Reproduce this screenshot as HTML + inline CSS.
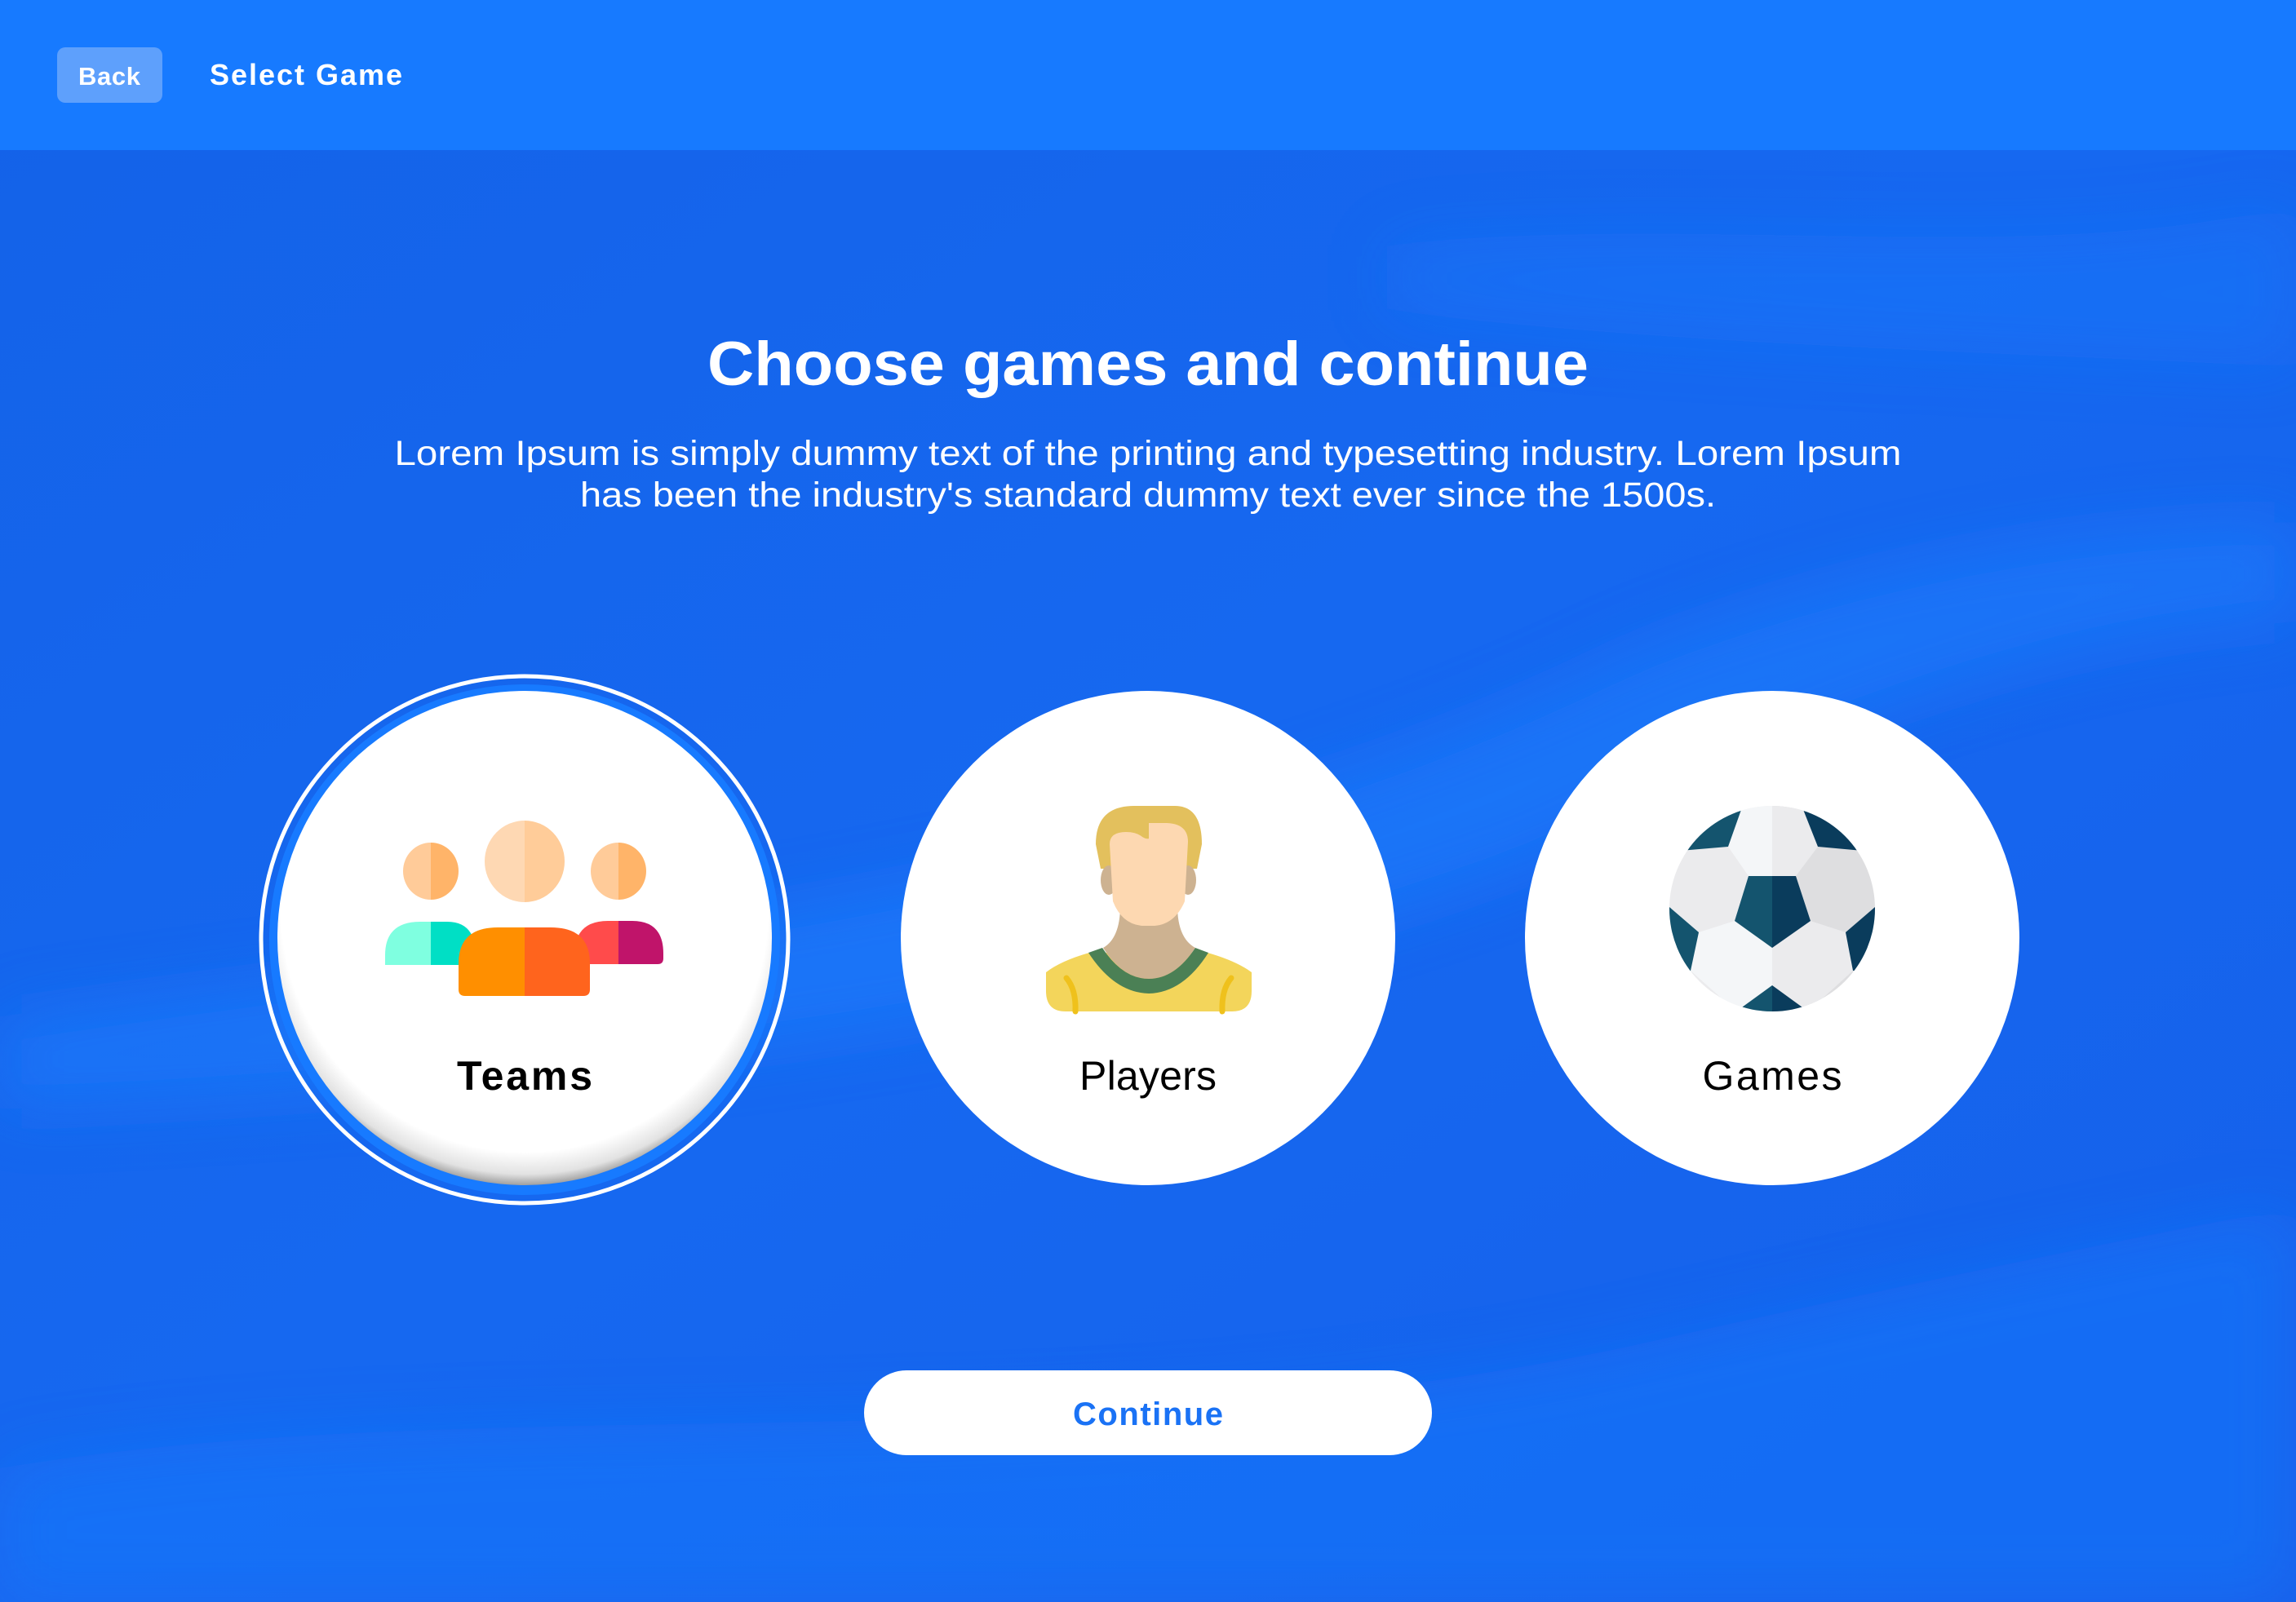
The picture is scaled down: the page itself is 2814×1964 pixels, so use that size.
<!DOCTYPE html>
<html><head><meta charset="utf-8"><style>
html,body{margin:0;padding:0;width:2814px;height:1964px;overflow:hidden;background:#1565ee}
svg{display:block}
text{font-family:"Liberation Sans",Arial,sans-serif}
</style></head><body>
<svg width="2814" height="1964" viewBox="0 0 2814 1964" xmlns="http://www.w3.org/2000/svg">
<defs>
<linearGradient id="bg" x1="0" y1="0" x2="1" y2="1">
<stop offset="0" stop-color="#1462e8"/><stop offset="0.5" stop-color="#1668f0"/><stop offset="1" stop-color="#1560ea"/>
</linearGradient>
<filter id="bl" x="-20%" y="-50%" width="140%" height="200%"><feGaussianBlur stdDeviation="40"/></filter>
<radialGradient id="sh" cx="0.5" cy="0.44" r="0.56">
<stop offset="0.88" stop-color="#fff"/><stop offset="0.96" stop-color="#e2e2e2"/><stop offset="1" stop-color="#a0a0a0"/>
</radialGradient>
<clipPath id="ball"><circle cx="2172" cy="1114" r="126"/></clipPath>
</defs>
<rect width="2814" height="1964" fill="url(#bg)"/>
<g filter="url(#bl)" opacity="0.9">
<path d="M0,1250 C700,1150 1400,1100 2000,800 C2300,680 2600,640 2814,640 L2814,760 C2500,780 2200,900 1900,1050 C1400,1250 700,1330 0,1360 Z" fill="#1a80ff" opacity="0.6"/>
<path d="M0,1800 C600,1700 1300,1800 2000,1650 C2400,1560 2700,1500 2814,1480 L2814,1964 L0,1964 Z" fill="#1a7cff" opacity="0.5"/>
<path d="M1700,300 C2100,260 2500,330 2814,250 L2814,450 C2400,430 2000,420 1700,380 Z" fill="#1a7cff" opacity="0.4"/>
</g>
<rect width="2814" height="184" fill="#177aff"/>
<rect x="70" y="58" width="129" height="68" rx="10" fill="#5ea0fc"/>
<text x="134" y="104" font-size="31" font-weight="bold" fill="#fff" text-anchor="middle" textLength="76">Back</text>
<text x="257" y="104" font-size="36" font-weight="bold" fill="#fff" textLength="236">Select Game</text>

<text x="1407" y="472" font-size="76" font-weight="bold" fill="#fff" text-anchor="middle" textLength="1080" lengthAdjust="spacingAndGlyphs">Choose games and continue</text>
<text x="1407" y="570" font-size="43" fill="#fff" text-anchor="middle" textLength="1847" lengthAdjust="spacingAndGlyphs">Lorem Ipsum is simply dummy text of the printing and typesetting industry. Lorem Ipsum</text>
<text x="1407" y="621" font-size="43" fill="#fff" text-anchor="middle" textLength="1392" lengthAdjust="spacingAndGlyphs">has been the industry's standard dummy text ever since the 1500s.</text>

<!-- Teams -->
<circle cx="643" cy="1152" r="323" fill="none" stroke="#fff" stroke-width="5"/>
<circle cx="643" cy="1152" r="313" fill="#177aff"/>
<circle cx="643" cy="1150" r="303" fill="url(#sh)"/>
<g transform="translate(0,-9)">
<path d="M472,1192 L472,1180 Q472,1139 515,1139 L528,1139 L528,1192 Z" fill="#7fffe0"/>
<path d="M528,1139 L548,1139 Q583,1139 583,1180 L583,1192 L528,1192 Z" fill="#00dfc5"/>
<path d="M704,1191 L704,1180 Q704,1138 745,1138 L758,1138 L758,1191 Z" fill="#ff4b4b"/>
<path d="M758,1138 L775,1138 Q813,1138 813,1178 L813,1184 Q813,1191 806,1191 L758,1191 Z" fill="#c0146a"/>
<path d="M562,1222 L562,1190 Q562,1146 610,1146 L643,1146 L643,1230 L570,1230 Q562,1230 562,1222 Z" fill="#ff8f00"/>
<path d="M643,1146 L675,1146 Q723,1146 723,1190 L723,1222 Q723,1230 715,1230 L643,1230 Z" fill="#ff641d"/>
<path d="M528,1042 A34,35 0 0 0 528,1112 Z" fill="#ffcb99"/><path d="M528,1042 A34,35 0 0 1 528,1112 Z" fill="#ffb469"/>
<path d="M758,1042 A34,35 0 0 0 758,1112 Z" fill="#ffcb99"/><path d="M758,1042 A34,35 0 0 1 758,1112 Z" fill="#ffb469"/>
<path d="M643,1015 A49,50 0 0 0 643,1115 Z" fill="#fed8b3"/><path d="M643,1015 A49,50 0 0 1 643,1115 Z" fill="#ffcc99"/>
</g>
<text x="643" y="1336" font-size="50" font-weight="bold" fill="#000" text-anchor="middle" textLength="166">Teams</text>

<!-- Players -->
<circle cx="1407" cy="1150" r="303" fill="#fff"/>
<path d="M1343,1035 Q1343,988 1390,988 L1440,988 Q1473,988 1473,1035 L1467,1065 L1349,1065 Z" fill="#e3c05d"/>
<ellipse cx="1359" cy="1079" rx="10" ry="18" fill="#cdb291"/>
<ellipse cx="1456" cy="1079" rx="10" ry="18" fill="#cdb291"/>
<path d="M1373,1110 L1443,1110 Q1443,1150 1465,1162 L1352,1162 Q1373,1150 1373,1110 Z" fill="#cdb291"/>
<path d="M1360,1035 Q1360,1020 1380,1020 Q1393,1020 1400,1026 Q1405,1029 1408,1028 L1408,1009 L1430,1009 Q1456,1010 1456,1032 L1452,1105 Q1440,1133 1415,1135 L1400,1135 Q1375,1133 1364,1105 Z" fill="#fdd8b1"/>
<path d="M1282,1192 Q1300,1178 1335,1168 L1480,1168 Q1515,1178 1534,1192 L1534,1215 Q1534,1240 1510,1240 L1306,1240 Q1282,1240 1282,1215 Z" fill="#f3d55b"/>
<path d="M1352,1162 L1465,1162 Q1440,1200 1408,1200 Q1376,1200 1352,1162 Z" fill="#cdb291"/>
<path d="M1334,1168 L1351,1162 Q1376,1200 1408,1200 Q1440,1200 1465,1162 L1481,1168 Q1450,1217 1408,1218 Q1366,1217 1334,1168 Z" fill="#4b8055"/>
<path d="M1307,1199 Q1319,1213 1318,1240" fill="none" stroke="#efc11c" stroke-width="7" stroke-linecap="round"/>
<path d="M1509,1199 Q1497,1213 1498,1240" fill="none" stroke="#efc11c" stroke-width="7" stroke-linecap="round"/>
<text x="1407" y="1336" font-size="50" fill="#000" text-anchor="middle" textLength="168">Players</text>

<!-- Games -->
<circle cx="2172" cy="1150" r="303" fill="#fff"/>
<g clip-path="url(#ball)">
<rect x="2040" y="980" width="132" height="270" fill="#ebebed"/>
<rect x="2172" y="980" width="132" height="270" fill="#dedee0"/>
<polygon points="2135,990 2118,1038 2143,1074 2172,1074 2172,985" fill="#f4f6f8"/>
<polygon points="2209,990 2228,1038 2201,1074 2172,1074 2172,985" fill="#ebebed"/>
<polygon points="2126,1129 2172,1162 2172,1208 2128,1240 2072,1190 2082,1143" fill="#f4f6f8"/>
<polygon points="2219,1129 2172,1162 2172,1208 2216,1240 2271,1190 2262,1143" fill="#ebebed"/>
<polygon points="2143,1074 2172,1074 2172,1162 2126,1129" fill="#14546e"/>
<polygon points="2201,1074 2172,1074 2172,1162 2219,1129" fill="#0a3c5c"/>
<polygon points="2035,1045 2118,1038 2135,990 2100,975" fill="#14546e"/>
<polygon points="2209,990 2228,1038 2305,1045 2250,975" fill="#0a3c5c"/>
<polygon points="2035,1112 2046,1112 2082,1143 2072,1190 2030,1190" fill="#14546e"/>
<polygon points="2310,1112 2298,1112 2262,1143 2271,1190 2315,1190" fill="#0a3c5c"/>
<polygon points="2172,1208 2128,1240 2172,1245" fill="#14546e"/>
<polygon points="2172,1208 2216,1240 2172,1245" fill="#0a3c5c"/>
</g>
<text x="2172" y="1336" font-size="50" fill="#000" text-anchor="middle" textLength="171">Games</text>

<!-- Continue -->
<rect x="1059" y="1680" width="696" height="104" rx="52" fill="#fff"/>
<text x="1407" y="1747" font-size="40" font-weight="bold" fill="#1a72f5" text-anchor="middle" textLength="184">Continue</text>
</svg>
</body></html>
